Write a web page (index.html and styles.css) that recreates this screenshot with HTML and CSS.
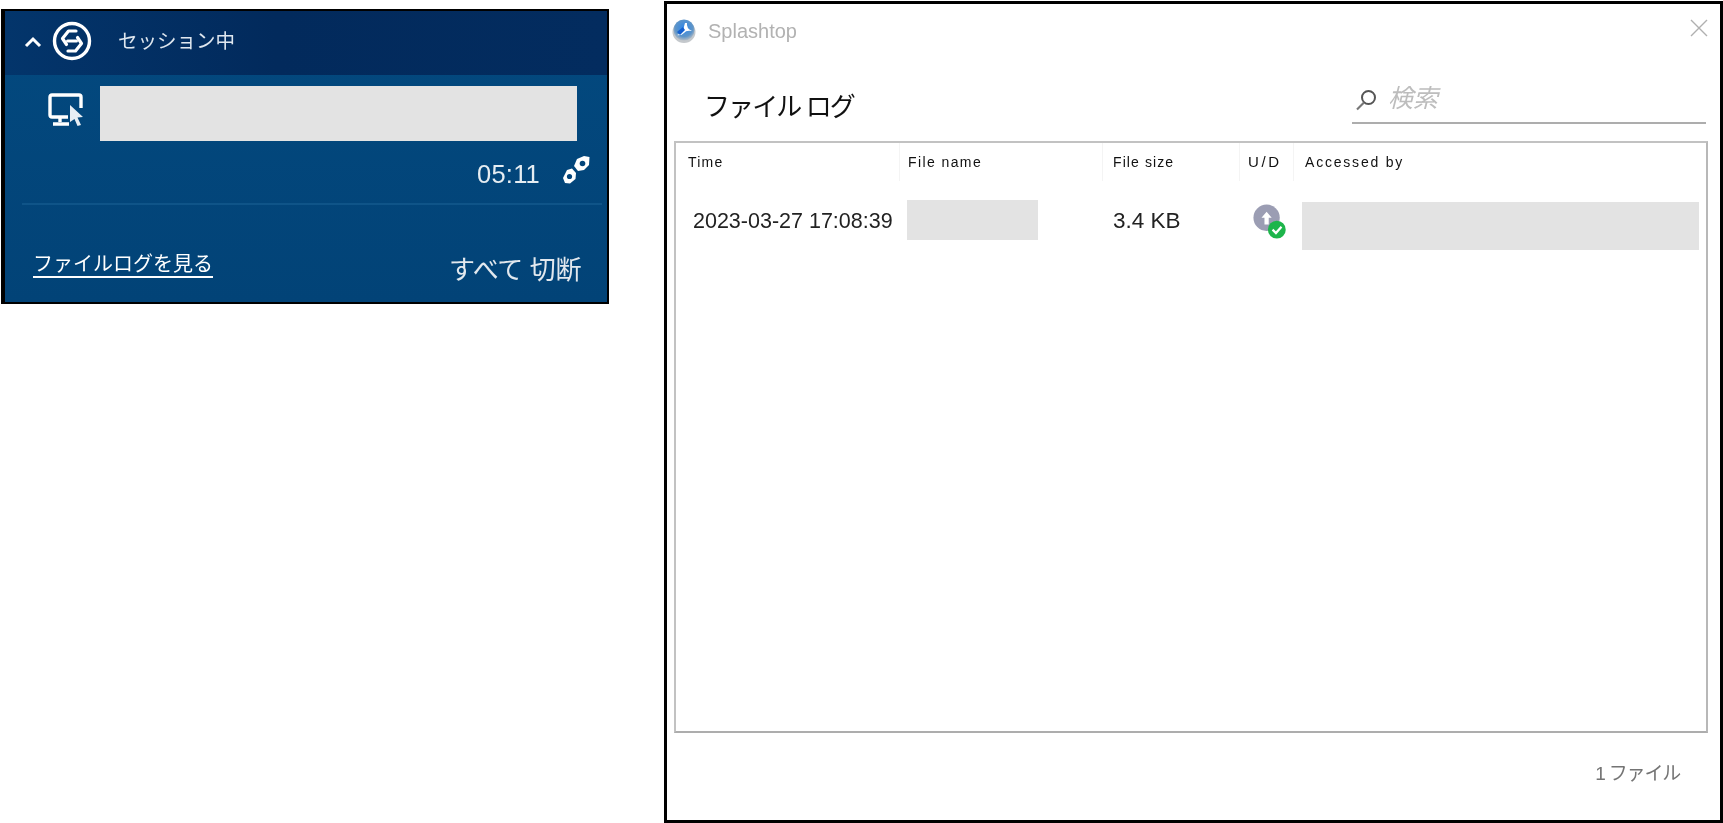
FILE: index.html
```html
<!DOCTYPE html>
<html lang="ja">
<head>
<meta charset="utf-8">
<title>Splashtop</title>
<link rel="stylesheet" href="styles.css">
</head>
<body>
<div class="stage">
  <section class="tray">
    <header class="tray-head">
      <svg class="chevron" viewBox="0 0 18 12"><path d="M2 10 L9 3 L16 10" fill="none" stroke="#fff" stroke-width="3"/></svg>
      <svg class="logo" viewBox="0 0 40 40">
        <circle cx="20" cy="20" r="17.5" fill="none" stroke="#fff" stroke-width="3.4"/>
        <path d="M24 10 H16.5 L10.5 17.5 L14.5 23.5" fill="none" stroke="#fff" stroke-width="3.2" stroke-linejoin="round" stroke-linecap="round"/>
        <path d="M16 30 H23.5 L29.5 22.5 L25.5 16.5" fill="none" stroke="#fff" stroke-width="3.2" stroke-linejoin="round" stroke-linecap="round"/>
        <path d="M15.5 20 H24.5" fill="none" stroke="#fff" stroke-width="3" stroke-linecap="round"/>
      </svg>
      <span class="tray-title soft">セッション中</span>
    </header>
    <div class="host-row">
      <svg class="monitor" viewBox="0 0 37 34">
        <path d="M20 24 H4 Q2 24 2 22 V4 Q2 2 4 2 H31 Q33 2 33 4 V15" fill="none" stroke="#fff" stroke-width="3.4"/>
        <path d="M12 24 V29 M5 31 H21" fill="none" stroke="#fff" stroke-width="3.4"/>
        <path d="M22 12 L35 24 L29.5 24.5 L33 32 L29.5 33 L26.5 26 L22 29 Z" fill="#e8eef4"/>
      </svg>
      <div class="redact redact-host"></div>
    </div>
    <div class="time-row">
      <span class="time soft">05:11</span>
      <svg class="link" viewBox="0 0 28 30">
        <path d="M1 23 L5 15 L10 13.5 L14 18 L13.5 24 L8 28.5 L3 28 Z" fill="#fff"/>
        <path d="M12 11 L15 4 L22 1 L27.5 2 L27 10 L22 15 L16 16 Z" fill="#fff"/>
        <circle cx="7.5" cy="21.5" r="2.6" fill="#03457b"/>
        <circle cx="20.5" cy="8.5" r="2.8" fill="#03457b"/>
      </svg>
    </div>
    <div class="tray-rule"></div>
    <footer class="tray-foot">
      <a class="log-link soft">ファイルログを見る</a>
      <span class="disconnect soft">すべて 切断</span>
    </footer>
  </section>

  <section class="window">
    <div class="titlebar">
      <svg class="app-icon" viewBox="0 0 24 26">
        <defs>
          <radialGradient id="globe" cx="50%" cy="40%" r="60%">
            <stop offset="0" stop-color="#2f86e8"/>
            <stop offset=".7" stop-color="#5f95c8"/>
            <stop offset="1" stop-color="#b5bcc4"/>
          </radialGradient>
        </defs>
        <ellipse cx="12" cy="14" rx="11.5" ry="11" fill="#c4c8cc"/>
        <circle cx="12" cy="12" r="10.5" fill="url(#globe)"/>
        <path d="M5 17 Q11 15 13 5 L15 5 Q14 10 20 13 Q14 12 12 15 Q9 18 5 17 Z" fill="#fff"/>
        <path d="M5 14 L11 9 L13 12 L8 17 Z" fill="#1560d0"/>
      </svg>
      <span class="app-name soft">Splashtop</span>
      <svg class="close" viewBox="0 0 18 18"><path d="M1 1 L17 17 M17 1 L1 17" stroke="#b0b0b0" stroke-width="1.4" fill="none"/></svg>
    </div>
    <div class="head-row">
      <h1 class="heading soft">ファイル ログ</h1>
      <div class="search">
        <svg class="search-icon" viewBox="0 0 22 22">
          <circle cx="13.5" cy="8.5" r="6.5" fill="none" stroke="#555" stroke-width="2"/>
          <path d="M9 13.5 L2 20.5" stroke="#777" stroke-width="2.2" fill="none"/>
        </svg>
        <span class="search-hint soft">検索</span>
      </div>
    </div>
    <div class="table">
      <div class="cols cols-head">
        <div class="th th-time soft">Time</div>
        <div class="th th-name soft">File name</div>
        <div class="th th-size soft">File size</div>
        <div class="th th-ud soft">U/D</div>
        <div class="th th-by soft">Accessed by</div>
      </div>
      <div class="cols cols-row">
        <div class="td td-time soft">2023-03-27 17:08:39</div>
        <div class="redact redact-name"></div>
        <div class="td td-size soft">3.4 KB</div>
        <svg class="status" viewBox="0 0 40 42">
          <circle cx="16" cy="16" r="15.5" fill="#9b9db3"/>
          <path d="M16 9 L22 16 H18.5 V24 H13.5 V16 H10 Z" fill="#fff"/>
          <circle cx="28" cy="30" r="10.5" fill="#1db54b"/>
          <path d="M23 30 L27 34 L33.5 26.5" stroke="#fff" stroke-width="2.6" fill="none"/>
        </svg>
        <div class="redact redact-by"></div>
      </div>
    </div>
    <div class="win-foot"><span class="count soft">1 ファイル</span></div>
  </section>
</div>
</body>
</html>
```

FILE: styles.css
```css
* { box-sizing: border-box; }

html, body { margin: 0; padding: 0; background: #fff; }

body {
  width: 1723px;
  height: 823px;
  overflow: hidden;
  font-family: "Liberation Sans", "Noto Sans CJK JP", sans-serif;
}

.soft { filter: blur(0.45px); }

.stage {
  display: flex;
  align-items: flex-start;
  padding: 1px 0 0 1px;
}

.redact { background: #e3e3e3; }

/* tray panel */
.tray {
  width: 608px;
  height: 295px;
  margin-top: 8px;
  border: 2px solid #000;
  border-left-width: 4px;
  background: linear-gradient(180deg, #03497f 0%, #024377 100%);
  color: #fff;
}

.tray-head {
  height: 64px;
  display: flex;
  align-items: center;
  background: linear-gradient(90deg, #03356b 0%, #022a5c 45%, #032c5f 100%);
  padding-left: 19px;
}

.chevron { width: 18px; height: 12px; margin-top: -2px; }

.logo { width: 40px; height: 40px; margin-left: 10px; margin-top: -4px; }

.tray-title {
  margin-left: 26px;
  margin-top: -8px;
  font-size: 19.5px;
  color: #dfe7ef;
}

.host-row {
  display: flex;
  align-items: flex-start;
  padding: 11px 0 0 43px;
}

.monitor { width: 37px; height: 34px; margin-top: 7px; }

.redact-host { width: 477px; height: 55px; margin-left: 15px; }

.time-row {
  height: 30px;
  margin-top: 18px;
  display: flex;
  align-items: center;
  justify-content: flex-end;
  padding-right: 17px;
}

.time { font-size: 25.5px; color: #e6edf2; letter-spacing: 0.2px; }

.link { width: 28px; height: 30px; margin-left: 22px; margin-top: -8px; }

.tray-rule {
  height: 2px;
  margin: 14px 5px 0 17px;
  background: #0f5488;
}

.tray-foot {
  display: flex;
  justify-content: space-between;
  align-items: flex-end;
  padding: 45px 26px 0 28px;
}

.log-link {
  font-size: 20px;
  line-height: 28px;
  text-decoration: underline;
  text-underline-offset: 5px;
  color: #fff;
}

.disconnect {
  font-size: 26px;
  line-height: 30px;
  letter-spacing: -0.4px;
  color: #e2e8ee;
  margin-bottom: -7px;
}

/* file log window */
.window {
  width: 1059px;
  height: 822px;
  margin-left: 55px;
  border: 3px solid #000;
  background: #fff;
  display: flex;
  flex-direction: column;
}

.titlebar {
  height: 54px;
  flex: none;
  display: flex;
  align-items: center;
  padding: 0 12px 0 5px;
}

.app-icon { width: 24px; height: 26px; }

.app-name {
  margin-left: 12px;
  font-size: 20px;
  color: #b2b2b2;
}

.close { width: 18px; height: 18px; margin-left: auto; margin-top: -6px; }

.head-row {
  height: 83px;
  flex: none;
  display: flex;
  justify-content: space-between;
  align-items: flex-start;
  padding: 0 14px 0 37px;
}

.heading {
  margin: 27px 0 0;
  font-size: 26px;
  line-height: 44px;
  font-weight: 400;
  letter-spacing: -1.9px;
  color: #111;
}

.search {
  width: 354px;
  height: 66px;
  margin-top: 0;
  padding: 24px 0 0 3px;
  border-bottom: 2px solid #adadad;
  display: flex;
  align-items: flex-start;
}

.search-icon { width: 22px; height: 22px; margin-top: 7px; }

.search-hint {
  margin-left: 11px;
  font-size: 25px;
  line-height: 32px;
  font-style: italic;
  color: #bdbdbd;
}

.table {
  height: 592px;
  flex: none;
  margin: 0 12px 0 7px;
  border: 2px solid #c2c2c2;
  border-right-color: #b8b8b8;
  border-bottom-color: #adadad;
}

.cols {
  display: grid;
  grid-template-columns: 224px 203px 137px 54px 406px;
}

.cols-head { height: 38px; }

.th {
  font-size: 14px;
  line-height: 38px;
  letter-spacing: 1.2px;
  color: #111;
  border-right: 1px solid #f4f4f4;
  height: 38px;
}

.th-time { padding-left: 12px; }
.th-name { padding-left: 8px; letter-spacing: 1.4px; }
.th-size { padding-left: 10px; letter-spacing: 1.1px; }
.th-ud { padding-left: 8px; font-size: 15px; letter-spacing: 2.6px; }
.th-by { padding-left: 11px; letter-spacing: 1.8px; border-right: 0; }

.cols-row { margin-top: 17px; height: 52px; }

.td {
  font-size: 21.5px;
  line-height: 46px;
  color: #222;
}

.td-time { padding-left: 17px; }
.td-size { padding-left: 10px; font-size: 22.5px; }

.redact-name { width: 131px; height: 40px; margin: 2px 0 0 7px; }

.status { width: 34px; height: 36px; margin: 6px 0 0 13px; }

.redact-by { width: 397px; height: 48px; margin: 4px 0 0 8px; }

.win-foot {
  flex: 1;
  display: flex;
  justify-content: flex-end;
  padding: 27px 40px 0 0;
}

.count {
  font-size: 19px;
  line-height: 28px;
  letter-spacing: -1.2px;
  color: #747474;
}
```
